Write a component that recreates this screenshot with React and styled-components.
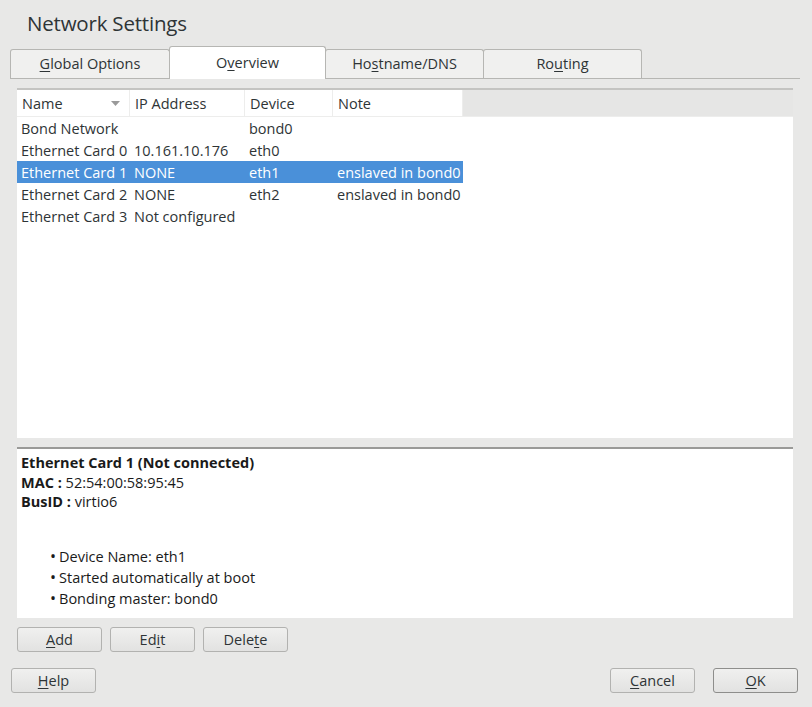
import styled, { createGlobalStyle } from "styled-components";

const GlobalStyle = createGlobalStyle`
  html, body {
    margin: 0;
    padding: 0;
    background: #e8e8e7;
  }
  body {
    font-family: "Open Sans", "Noto Sans", sans-serif;
    color: #2e3436;
  }
`;

const rows = [
  { name: "Bond Network", ip: "", device: "bond0", note: "" },
  { name: "Ethernet Card 0", ip: "10.161.10.176", device: "eth0", note: "" },
  { name: "Ethernet Card 1", ip: "NONE", device: "eth1", note: "enslaved in bond0", selected: true },
  { name: "Ethernet Card 2", ip: "NONE", device: "eth2", note: "enslaved in bond0" },
  { name: "Ethernet Card 3", ip: "Not configured", device: "", note: "" },
];

const cols = [
  { label: "Name", width: 113, sort: true },
  { label: "IP Address", width: 115 },
  { label: "Device", width: 88 },
  { label: "Note", width: 130 },
];

function M({ text, at }) {
  return (
    <>
      {text.slice(0, at)}
      <U>{text[at]}</U>
      {text.slice(at + 1)}
    </>
  );
}

function App() {
  return (
    <Window>
      <GlobalStyle />
      <Title>Network Settings</Title>
      <TabBar>
        <Tab w={160}><M text="Global Options" at={0} /></Tab>
        <Tab w={157} active><M text="Overview" at={1} /></Tab>
        <Tab w={159}><M text="Hostname/DNS" at={2} /></Tab>
        <Tab w={159}><M text="Routing" at={2} /></Tab>
      </TabBar>

      <Body>
        <TablePanel>
          <HeaderRow>
            {cols.map((c) => (
              <HeadCell key={c.label} w={c.width}>
                <span>{c.label}</span>
                {c.sort && (
                  <svg width="9" height="5" viewBox="0 0 9 5">
                    <path d="M0 0 L9 0 L4.5 5 Z" fill="#9a9a9a" />
                  </svg>
                )}
              </HeadCell>
            ))}
            <HeadFill />
          </HeaderRow>
          {rows.map((r) => (
            <Row key={r.name} selected={r.selected}>
              <Cell w={113}>{r.name}</Cell>
              <Cell w={115}>{r.ip}</Cell>
              <Cell w={88}>{r.device}</Cell>
              <Cell w={130}>{r.note}</Cell>
            </Row>
          ))}
        </TablePanel>

        <DetailPanel>
          <strong>Ethernet Card 1 (Not connected)</strong>
          <DetailLine><b>MAC :</b> 52:54:00:58:95:45</DetailLine>
          <DetailLine><b>BusID :</b> virtio6</DetailLine>
          <Bullets>
            <li>Device Name: eth1</li>
            <li>Started automatically at boot</li>
            <li>Bonding master: bond0</li>
          </Bullets>
        </DetailPanel>

        <ButtonRow>
          <Button><M text="Add" at={0} /></Button>
          <Button><M text="Edit" at={2} /></Button>
          <Button><M text="Delete" at={4} /></Button>
        </ButtonRow>
      </Body>

      <Footer>
        <Button><M text="Help" at={0} /></Button>
        <FooterRight>
          <Button><M text="Cancel" at={0} /></Button>
          <Button dark><M text="OK" at={0} /></Button>
        </FooterRight>
      </Footer>
    </Window>
  );
}

export default App;

const Window = styled.div`
  width: 812px;
  height: 707px;
  box-sizing: border-box;
  background: #e8e8e7;
  display: flex;
  flex-direction: column;
  font-size: 14.5px;
`;

const Title = styled.h1`
  margin: 0;
  padding: 9px 0 0 27px;
  height: 36px;
  box-sizing: border-box;
  font-size: 20.5px;
  font-weight: 400;
  color: #2e3436;
  line-height: 28px;
  letter-spacing: -0.2px;
`;

const TabBar = styled.div`
  display: flex;
  align-items: flex-end;
  height: 33px;
  margin: 9px 12px 0 10px;
  border-bottom: 1px solid #b6b6b3;
`;

const Tab = styled.div`
  width: ${(p) => p.w}px;
  height: ${(p) => (p.active ? "33px" : "29px")};
  box-sizing: border-box;
  display: flex;
  align-items: center;
  justify-content: center;
  padding-bottom: ${(p) => (p.active ? "2px" : "1px")};
  border: 1px solid #b6b6b3;
  border-bottom: none;
  border-radius: 3px 3px 0 0;
  background: ${(p) => (p.active ? "#ffffff" : "#f0f0ef")};
  margin-bottom: ${(p) => (p.active ? "-1px" : "0")};
  color: #2e3436;
  font-size: 14.5px;
  margin-right: -1px;
  position: relative;
  z-index: ${(p) => (p.active ? 1 : 0)};
`;

const U = styled.span`
  text-decoration: underline;
  text-underline-offset: 2px;
`;

const Body = styled.div`
  padding: 9px 19px 0 17px;
  display: flex;
  flex-direction: column;
`;

const TablePanel = styled.div`
  height: 350px;
  background: #ffffff;
  border-top: 2px solid #c4c4c2;
  box-sizing: border-box;
`;

const HeaderRow = styled.div`
  display: flex;
  height: 26px;
  border-bottom: 1px solid #ededec;
`;

const HeadCell = styled.div`
  width: ${(p) => p.w}px;
  box-sizing: border-box;
  display: flex;
  align-items: center;
  justify-content: space-between;
  padding: 0 9px 0 5px;
  border-right: 1px solid #ededec;
  background: #ffffff;
  color: #2e3436;
`;

const HeadFill = styled.div`
  flex: 1;
  background: #e6e6e5;
`;

const Row = styled.div`
  display: flex;
  height: 22px;
  align-items: center;
  width: 446px;
  background: ${(p) => (p.selected ? "#4a90d9" : "transparent")};
  color: ${(p) => (p.selected ? "#ffffff" : "#2e3436")};
`;

const Cell = styled.div`
  width: ${(p) => p.w}px;
  padding-left: 4px;
  box-sizing: border-box;
  white-space: nowrap;
  overflow: hidden;
`;

const DetailPanel = styled.div`
  margin-top: 9px;
  height: 171px;
  box-sizing: border-box;
  background: #ffffff;
  border-top: 2px solid #9a9a98;
  padding: 4px 4px;
  line-height: 19.5px;
  color: #1a1a1a;
  font-size: 14.5px;
  strong {
    font-weight: 700;
  }
`;

const DetailLine = styled.div`
  b {
    font-weight: 700;
  }
`;

const Bullets = styled.ul`
  margin: 34px 0 0 0;
  padding-left: 29px;
  list-style: none;
  line-height: 21px;
  li::before {
    content: "•";
    font-size: 16px;
    margin-right: 3px;
  }
`;

const ButtonRow = styled.div`
  display: flex;
  gap: 8px;
  margin-top: 9px;
`;

const Button = styled.button`
  width: 85px;
  height: 25px;
  box-sizing: border-box;
  border: 1px solid ${(p) => (p.dark ? "#8e8e8c" : "#b2b2b0")};
  border-radius: 3px;
  background: linear-gradient(#f0f0ef, #e2e2e1);
  font-family: "Open Sans", "Noto Sans", sans-serif;
  font-size: 14.5px;
  color: #2e3436;
  padding: 0;
  display: flex;
  align-items: center;
  justify-content: center;
`;

const Footer = styled.div`
  display: flex;
  justify-content: space-between;
  padding: 16px 14px 0 11px;
`;

const FooterRight = styled.div`
  display: flex;
  gap: 18px;
`;
